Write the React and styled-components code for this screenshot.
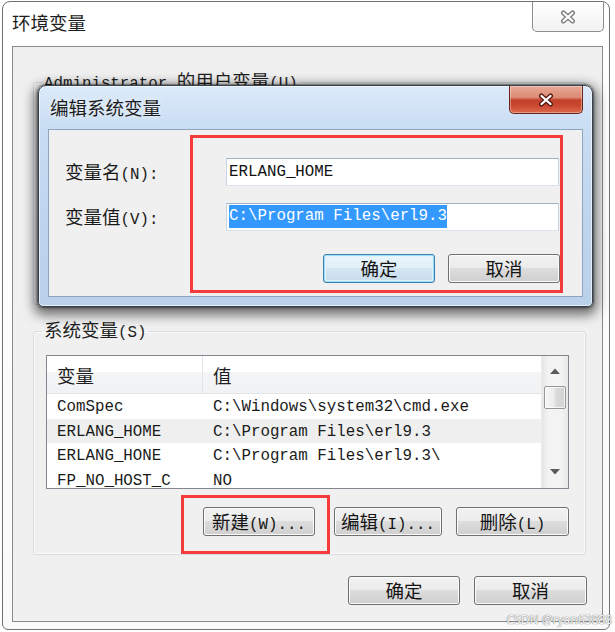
import React from 'react';
import styled, { createGlobalStyle, css } from 'styled-components';

const CJK = `"Noto Sans CJK SC", "Noto Sans", sans-serif`;
const MONO = `"Liberation Mono", "Noto Sans CJK SC", monospace`;

const GlobalStyle = createGlobalStyle`
  html, body { margin: 0; padding: 0; background: #ffffff; }
  body { font-family: ${CJK}; font-size: 18.5px; color: #151515; }
  * { box-sizing: border-box; }
`;

const Page = styled.div`
  position: relative;
  width: 615px;
  height: 632px;
  padding: 1px 0 0 2px;
  overflow: hidden;
`;

const Window = styled.div`
  position: relative;
  width: 608px;
  height: 629px;
  border: 1px solid #727272;
  border-radius: 8px 8px 6px 6px;
  background: linear-gradient(#ffffff, #fafafa);
  display: flex;
  flex-direction: column;
`;

const TitleBar = styled.div`
  flex: none;
  height: 44px;
  display: flex;
  justify-content: space-between;
  align-items: flex-start;
`;

const WindowTitle = styled.div`
  margin: 8px 0 0 9px;
  font-size: 18.5px;
  line-height: 24px;
  color: #1e1e1e;
`;

const CaptionClose = styled.div`
  margin-right: 5px;
  width: 72px;
  height: 30px;
  border: 1px solid #8e8e8e;
  border-top: none;
  border-radius: 0 0 5px 5px;
  background: linear-gradient(#ffffff, #f2f2f2);
  display: flex;
  align-items: center;
  justify-content: center;
`;

const Client = styled.div`
  margin: 0 6px 0 9px;
  height: 576px;
  border: 1px solid #8a8a8a;
  background: #f0f0f0;
  display: flex;
  flex-direction: column;
  padding: 22px 16px 0 20px;
`;

const Group = styled.fieldset`
  margin: 0;
  min-width: 0;
  padding: 11px 16px 18px 12px;
  border: 1px solid #d5dde3;
  border-radius: 3px;
  box-shadow: inset 0 0 0 1px #fbfbfb;
  ${(p) => p.$h && css`height: ${p.$h}px; overflow: hidden;`}
  & + & { margin-top: 13px; }
`;

const Legend = styled.legend`
  margin-left: -4px;
  padding: 0 2px;
  font-size: 18.5px;
  line-height: 22px;
  color: #1e1e1e;
`;

const Mono = styled.span`
  font-family: ${MONO};
  font-size: 15.8px;
`;

const ListView = styled.div`
  height: 134px;
  border: 1px solid #828790;
  background: #ffffff;
  display: flex;
`;

const ListBody = styled.div`
  flex: 1;
  overflow: hidden;
  display: flex;
  flex-direction: column;
`;

const HeaderRow = styled.div`
  flex: none;
  height: 38px;
  display: grid;
  grid-template-columns: 155px 1fr;
  background: linear-gradient(#ffffff 0%, #ffffff 44%, #f4f5f7 44%, #f1f2f4 100%);
  border-bottom: 1px solid #e2e4e7;
`;

const HeaderCell = styled.div`
  display: flex;
  align-items: center;
  padding-left: 10px;
  font-size: 18.5px;
  color: #1e1e1e;
  & + & { border-left: 1px solid #e2e4e7; }
`;

const Row = styled.div`
  flex: none;
  height: 24.5px;
  display: grid;
  grid-template-columns: 155px 1fr;
  background: ${(p) => (p.$shaded ? '#efefef' : '#ffffff')};
  font-family: ${MONO};
  font-size: 15.8px;
  line-height: 26px;
  color: #1a1a1a;
`;

const Cell = styled.div`
  padding-left: ${(p) => (p.$second ? 11 : 10)}px;
  white-space: nowrap;
  overflow: hidden;
`;

const ScrollBar = styled.div`
  flex: none;
  width: 27px;
  border-left: 1px solid #ececec;
  background: linear-gradient(to right, #e6e6e6, #f3f3f3 25%, #f3f3f3 75%, #e8e8e8);
  display: flex;
  flex-direction: column;
`;

const ArrowBox = styled.div`
  flex: none;
  height: ${(p) => p.$h}px;
  display: flex;
  align-items: center;
  justify-content: center;
`;

const Thumb = styled.div`
  flex: none;
  height: 23px;
  margin: 0 2px;
  border: 1px solid #979797;
  border-radius: 2px;
  background: linear-gradient(to right, #f6f6f6 0%, #ececec 45%, #dadada 55%, #d2d2d2 100%);
  box-shadow: inset 0 0 0 1px rgba(255, 255, 255, 0.7);
`;

const Track = styled.div`
  flex: 1;
`;

const Arrow = ({ down }) => (
  <svg width="10" height="6" viewBox="0 0 10 6">
    <polygon points={down ? '0,0 10,0 5,5.5' : '0,6 10,6 5,0.5'} fill="#5a5a5a" />
  </svg>
);

const VarList = ({ rows, thumb = true }) => (
  <ListView>
    <ListBody>
      <HeaderRow>
        <HeaderCell>变量</HeaderCell>
        <HeaderCell>值</HeaderCell>
      </HeaderRow>
      {rows.map((r, i) => (
        <Row key={r[0] + i} $shaded={r[2]}>
          <Cell>{r[0]}</Cell>
          <Cell $second>{r[1]}</Cell>
        </Row>
      ))}
    </ListBody>
    <ScrollBar>
      <ArrowBox $h={30}><Arrow /></ArrowBox>
      {thumb && <Thumb />}
      <Track />
      <ArrowBox $h={32}><Arrow down /></ArrowBox>
    </ScrollBar>
  </ListView>
);

const Button = styled.button`
  flex: none;
  width: ${(p) => p.$w}px;
  height: 29px;
  padding: 0;
  border: 1px solid #707070;
  border-radius: 3px;
  background: linear-gradient(#f2f2f2 0%, #ebebeb 49%, #dddddd 50%, #cfcfcf 100%);
  box-shadow: inset 0 0 0 1px #fbfbfb;
  font-family: ${CJK};
  font-size: 18.5px;
  line-height: 27px;
  color: #141414;
  ${(p) =>
    p.$default &&
    css`
      border-color: #3c7fb1;
      background: linear-gradient(#eaf6fd 0%, #e2eff7 49%, #d3e6f2 50%, #c8dcea 100%);
      box-shadow: inset 0 0 0 1px #9fdcf5, inset 0 0 0 2px #dff3fb;
    `}
`;

const GroupButtons = styled.div`
  display: flex;
  justify-content: flex-end;
  align-items: center;
  gap: 14px;
  margin-top: 18px;
`;

const Annotated = styled.span`
  position: relative;
  display: inline-flex;
  margin-right: 5px;
  &::after {
    content: '';
    position: absolute;
    left: -22px;
    right: -15px;
    top: -12px;
    bottom: -18px;
    border: 3px solid #f53b3b;
    pointer-events: none;
  }
`;

const DialogButtons = styled.div`
  display: flex;
  justify-content: flex-end;
  gap: 14px;
  margin-top: 21px;
  margin-right: -1px;
`;

/* ---------- Edit dialog (floats over the main window) ---------- */

const EditDialog = styled.div`
  position: absolute;
  left: 35px;
  top: 83px;
  width: 555px;
  height: 222px;
  border: 1px solid #38434f;
  border-radius: 8px 8px 5px 5px;
  background: linear-gradient(180deg, #dceafa 0%, #c9ddf3 18%, #bfd5ee 60%, #bad1ec 100%);
  box-shadow:
    0 0 2px 1px rgba(0, 0, 0, 0.45),
    0 4px 12px 4px rgba(0, 0, 0, 0.55),
    inset 0 0 0 1px rgba(255, 255, 255, 0.6);
  display: flex;
  flex-direction: column;
`;

const DialogTitleBar = styled.div`
  flex: none;
  height: 43px;
  display: flex;
  justify-content: space-between;
  align-items: flex-start;
`;

const DialogTitle = styled.div`
  margin: 9px 0 0 11px;
  font-size: 18.5px;
  line-height: 24px;
  color: #1c1c1c;
  text-shadow: 0 0 6px rgba(255, 255, 255, 0.9);
`;

const RedClose = styled.div`
  margin-right: 9px;
  width: 74px;
  height: 28px;
  border: 1px solid #6a2417;
  border-top: none;
  border-radius: 0 0 5px 5px;
  background: linear-gradient(#e9a897 0%, #dc8b76 42%, #c3402a 52%, #c9482f 72%, #dd6a4d 100%);
  box-shadow: inset 0 0 0 1px rgba(255, 255, 255, 0.35);
  display: flex;
  align-items: center;
  justify-content: center;
`;

const DialogClient = styled.div`
  position: relative;
  flex: 1;
  margin: 0 9px 9px;
  border: 1px solid #8fa4bd;
  background: #f0f0f0;
  padding: 26px 23px 0 16px;
`;

const FormGrid = styled.div`
  display: grid;
  grid-template-columns: 161px 333px;
  row-gap: 14px;
  align-items: center;
`;

const FieldLabel = styled.label`
  font-size: 18.5px;
  line-height: 24px;
  color: #1a1a1a;
  margin-top: 3px;
`;

const TextBox = styled.div`
  height: 28px;
  border: 1px solid;
  border-color: #9fb3c8 #c8d4e0 #dbe4ed #c8d4e0;
  background: #ffffff;
  padding: 0 2px;
  display: flex;
  align-items: center;
  font-family: ${MONO};
  font-size: 15.8px;
  color: #111;
  white-space: nowrap;
  overflow: hidden;
`;

const Selection = styled.span`
  display: inline-block;
  line-height: 23px;
  background: #3399ff;
  color: #ffffff;
`;

const DialogActions = styled.div`
  display: flex;
  justify-content: flex-end;
  gap: 13px;
  margin-top: 22px;
  margin-right: -1px;
`;

const RedBox = styled.div`
  position: absolute;
  left: 141px;
  top: 5px;
  width: 373px;
  height: 158px;
  border: 3px solid #f53b3b;
  pointer-events: none;
`;

const Watermark = styled.div`
  position: absolute;
  right: 3px;
  bottom: 5px;
  font-family: "Noto Sans", sans-serif;
  font-size: 12px;
  line-height: 14px;
  color: #f7f7f7;
  text-shadow: 0 0 1px #7d7d7d, 0 0 1px #7d7d7d;
`;

const XGlyph = ({ outline, fill }) => (
  <svg width="18" height="14" viewBox="0 0 18 14">
    <path d="M4.5 3 L13.5 11 M13.5 3 L4.5 11" stroke={outline} strokeWidth="5" strokeLinecap="round" fill="none" />
    <path d="M4.5 3 L13.5 11 M13.5 3 L4.5 11" stroke={fill} strokeWidth="2.3" strokeLinecap="round" fill="none" />
  </svg>
);

const systemVars = [
  ['ComSpec', 'C:\\Windows\\system32\\cmd.exe', false],
  ['ERLANG_HOME', 'C:\\Program Files\\erl9.3', true],
  ['ERLANG_HONE', 'C:\\Program Files\\erl9.3\\', false],
  ['FP_NO_HOST_C', 'NO', false],
];

const userVars = [
  ['TEMP', '%USERPROFILE%\\AppData\\Local\\Temp', false],
  ['TMP', '%USERPROFILE%\\AppData\\Local\\Temp', false],
];

export default function App() {
  return (
    <>
      <GlobalStyle />
      <Page>
        <Window>
          <TitleBar>
            <WindowTitle>环境变量</WindowTitle>
            <CaptionClose>
              <XGlyph outline="#7c7c7c" fill="#ffffff" />
            </CaptionClose>
          </TitleBar>
          <Client>
            <Group $h={236}>
              <Legend>
                <Mono>Administrator </Mono>的用户变量<Mono>(U)</Mono>
              </Legend>
              <VarList rows={userVars} thumb={false} />
              <GroupButtons>
                <Button $w={112}>新建<Mono>(N)...</Mono></Button>
                <Button $w={108}>编辑<Mono>(E)...</Mono></Button>
                <Button $w={113}>删除<Mono>(D)</Mono></Button>
              </GroupButtons>
            </Group>
            <Group>
              <Legend>
                系统变量<Mono>(S)</Mono>
              </Legend>
              <VarList rows={systemVars} />
              <GroupButtons>
                <Annotated>
                  <Button $w={112}>新建<Mono>(W)...</Mono></Button>
                </Annotated>
                <Button $w={108}>编辑<Mono>(I)...</Mono></Button>
                <Button $w={113}>删除<Mono>(L)</Mono></Button>
              </GroupButtons>
            </Group>
            <DialogButtons>
              <Button $w={112}>确定</Button>
              <Button $w={113}>取消</Button>
            </DialogButtons>
          </Client>

          <EditDialog>
            <DialogTitleBar>
              <DialogTitle>编辑系统变量</DialogTitle>
              <RedClose>
                <XGlyph outline="#5a1a10" fill="#ffffff" />
              </RedClose>
            </DialogTitleBar>
            <DialogClient>
              <FormGrid>
                <FieldLabel>变量名<Mono>(N):</Mono></FieldLabel>
                <TextBox>ERLANG_HOME</TextBox>
                <FieldLabel>变量值<Mono>(V):</Mono></FieldLabel>
                <TextBox>
                  <Selection>C:\Program Files\erl9.3</Selection>
                </TextBox>
              </FormGrid>
              <DialogActions>
                <Button $w={112} $default>确定</Button>
                <Button $w={112}>取消</Button>
              </DialogActions>
              <RedBox />
            </DialogClient>
          </EditDialog>
        </Window>
        <Watermark>CSDN @ryan63888</Watermark>
      </Page>
    </>
  );
}
